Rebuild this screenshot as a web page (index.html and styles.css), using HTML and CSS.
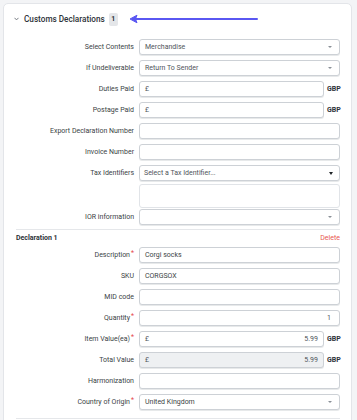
FILE: index.html
```html
<!DOCTYPE html>
<html lang="en">
<head>
<meta charset="utf-8">
<title>Customs Declarations</title>
<link rel="stylesheet" href="styles.css">
</head>
<body>
<div class="card">
  <div class="header">
    <svg class="chev" width="5" height="4" viewBox="0 0 5 4"><path d="M0.5 0.8 L2.5 2.9 L4.5 0.8" fill="none" stroke="#6b7178" stroke-width="0.9"/></svg>
    <span class="title">Customs Declarations</span>
    <span class="badge">1</span>
    <svg class="arrow" width="128" height="10" viewBox="0 0 128 10"><path d="M4 5 H127" stroke="#5a57f2" stroke-width="2" stroke-linecap="round"/><path d="M0 5 L7 1.2 L5.5 5 L7 8.8 Z" fill="#5a57f2" stroke="#5a57f2" stroke-width="1" stroke-linejoin="round"/></svg>
  </div>

  <div class="row"><span class="lbl">Select Contents</span><div class="field select"><span class="val">Merchandise</span><i class="caret"></i></div></div>
  <div class="row"><span class="lbl">If Undeliverable</span><div class="field select"><span class="val">Return To Sender</span><i class="caret"></i></div></div>
  <div class="row"><span class="lbl">Duties Paid</span><div class="money"><div class="field"><span class="val">£</span></div><span class="cur">GBP</span></div></div>
  <div class="row"><span class="lbl">Postage Paid</span><div class="money"><div class="field"><span class="val">£</span></div><span class="cur">GBP</span></div></div>
  <div class="row"><span class="lbl">Export Declaration Number</span><div class="field"></div></div>
  <div class="row"><span class="lbl">Invoice Number</span><div class="field"></div></div>
  <div class="row"><span class="lbl">Tax Identifiers</span><div class="field select tax"><span class="val">Select a Tax Identifier...</span><i class="caret dark"></i></div></div>
  <div class="row tall"><span class="lbl"></span><div class="field area"></div></div>
  <div class="row tight"><span class="lbl">IOR information</span><div class="field select"><span class="val"></span><i class="caret"></i></div></div>

  <div class="divider first"></div>

  <div class="decl-head"><span class="decl">Declaration 1</span><span class="delete">Delete</span></div>

  <div class="row r1"><span class="lbl">Description<sup class="req">*</sup></span><div class="field"><span class="val dark">Corgi socks</span></div></div>
  <div class="row"><span class="lbl">SKU</span><div class="field"><span class="val dark">CORGSOX</span></div></div>
  <div class="row"><span class="lbl">MID code</span><div class="field"></div></div>
  <div class="row"><span class="lbl">Quantity<sup class="req">*</sup></span><div class="field right"><span class="val">1</span></div></div>
  <div class="row"><span class="lbl">Item Value(ea)<sup class="req">*</sup></span><div class="money"><div class="field"><span class="val">£</span><span class="num">5.99</span></div><span class="cur">GBP</span></div></div>
  <div class="row"><span class="lbl">Total Value</span><div class="money"><div class="field disabled"><span class="val">£</span><span class="num">5.99</span></div><span class="cur">GBP</span></div></div>
  <div class="row"><span class="lbl">Harmonization</span><div class="field"></div></div>
  <div class="row"><span class="lbl">Country of Origin<sup class="req">*</sup></span><div class="field select"><span class="val dark">United Kingdom</span><i class="caret"></i></div></div>

  <div class="divider last"></div>
</div>
</body>
</html>
```

FILE: styles.css
```css
html, body {
  margin: 0;
  padding: 0;
}
body {
  background: #f3f4f6;
  font-family: Roboto, "Liberation Sans", Arial, sans-serif;
  color: #3a3f45;
  width: 357px;
  height: 420px;
  overflow: hidden;
}
.card {
  margin: 3px 5px 0 3px;
  background: #ffffff;
  border: 1px solid #e3e5e9;
  border-radius: 5px;
  padding: 0 11px 30px 12px;
}
.header {
  display: flex;
  align-items: center;
  height: 30px;
  margin-left: -2px;
}
.chev {
  display: block;
  margin-right: 5px;
}
.title {
  font-size: 8.2px;
  font-weight: 500;
  color: #2d3238;
  letter-spacing: 0;
}
.badge {
  margin-left: 4px;
  width: 9px;
  height: 13px;
  background: #e4e6e9;
  border-radius: 2px;
  font-size: 7px;
  font-weight: 700;
  color: #2d3238;
  display: flex;
  align-items: center;
  justify-content: center;
}
.arrow {
  display: block;
  margin-left: 12px;
  margin-top: -1px;
}
.row {
  display: flex;
  align-items: center;
  gap: 5px;
  height: 16px;
  margin-top: 5px;
}
.row.tall {
  height: 24px;
  margin-top: 3px;
  align-items: stretch;
}
.row.tight {
  margin-top: 1px;
}
.row.r1 {
  margin-top: 1px;
}
.lbl {
  width: 118px;
  flex: none;
  text-align: right;
  font-size: 7px;
  color: #3a3f45;
  white-space: nowrap;
}
.req {
  color: #e5484d;
  font-size: 7px;
  vertical-align: 2px;
  line-height: 0;
  margin-left: 1px;
}
.field {
  flex: 1;
  box-sizing: border-box;
  height: 16px;
  border: 1px solid #cdd1d6;
  border-radius: 3px;
  box-shadow: 0 1px 0 rgba(60, 70, 80, 0.12);
  background: #ffffff;
  display: flex;
  align-items: center;
  padding: 0 5px 0 5px;
  font-size: 7px;
  color: #50555b;
  min-width: 0;
}
.field.area {
  height: 24px;
  border-color: #e1e4e8;
  box-shadow: none;
}
.field.disabled {
  background: #eef0f2;
}
.field.right {
  justify-content: flex-end;
  padding-right: 8px;
}
.field.tax {
  padding-left: 4px;
}
.val.dark {
  color: #3a3f45;
}
.num {
  margin-left: auto;
}
.select {
  position: relative;
}
.caret {
  position: absolute;
  right: 7px;
  top: 6px;
  width: 0;
  height: 0;
  border-left: 2px solid transparent;
  border-right: 2px solid transparent;
  border-top: 2.5px solid #8a9097;
}
.caret.dark {
  right: 6px;
  border-left-width: 2.5px;
  border-right-width: 2.5px;
  border-top: 3px solid #1f2327;
}
.money {
  flex: 1;
  display: flex;
  align-items: center;
  gap: 3px;
  min-width: 0;
}
.cur {
  font-size: 7px;
  font-weight: 700;
  color: #2d3238;
  width: 14px;
  margin-right: -1px;
}
.divider {
  height: 1px;
  background: #e5e7ea;
}
.divider.first {
  margin-top: 4px;
}
.divider.last {
  margin-top: 8px;
}
.decl-head {
  display: flex;
  justify-content: space-between;
  align-items: center;
  height: 16px;
}
.decl {
  font-size: 7px;
  font-weight: 700;
  color: #2d3238;
}
.delete {
  font-size: 7px;
  color: #e8574f;
}
```
